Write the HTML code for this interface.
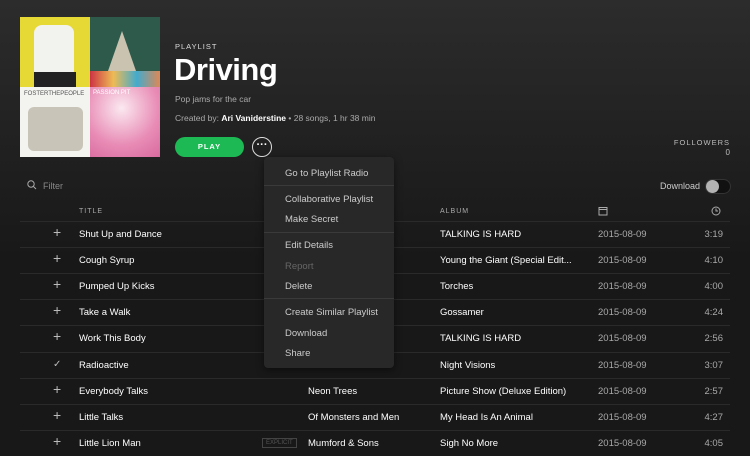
<!DOCTYPE html>
<html style="background:#181818"><head><style>
*{margin:0;padding:0;box-sizing:border-box}
body{width:750px;height:450px;overflow:hidden;font-family:"Liberation Sans",sans-serif;background:linear-gradient(#2c2c2c 0px,#1e1e1e 180px,#181818 260px);color:#fff;position:relative}
.abs{position:absolute}
.art{left:20px;top:17px;width:140px;height:140px}
.q{position:absolute;width:70px;height:70px}
.row{position:absolute;left:20px;width:710px;height:26px;border-top:1px solid #2a2a2a;font-size:9.5px}
.row span{position:absolute;top:7px;white-space:nowrap}
.t{left:59px;color:#fff}
.ar{left:288px;color:#fff}
.al{left:420px;color:#fff}
.d{left:578px;color:#aaa}
.du{right:7px;color:#aaa}
.pl{left:33px;color:#bbb;font-size:14px;top:2px!important;font-weight:300}
.menu{left:264px;top:157px;width:130px;height:211px;background:#282828;border-radius:4px;box-shadow:0 2px 8px rgba(0,0,0,.5);font-size:9.5px;color:#ccc}
.menu div{position:absolute;left:21px}
.sep{left:0!important;width:130px;height:1px;background:#3a3a3a}
</style></head><body>
<div class="abs art">
 <div class="q" style="left:0;top:0;background:#e6d835"><div class="abs" style="left:14px;top:8px;width:40px;height:60px;background:#f2f2ee;border-radius:8px 8px 0 0"></div><div class="abs" style="left:14px;top:55px;width:42px;height:15px;background:#222"></div></div>
 <div class="q" style="left:70px;top:0;background:#2e5a4c"><div class="abs" style="left:0;top:54px;width:70px;height:16px;background:linear-gradient(90deg,#c34,#eb5,#4ac,#d85)"></div><div class="abs" style="left:18px;top:14px;width:0;height:0;border-left:14px solid transparent;border-right:14px solid transparent;border-bottom:40px solid #c9c3b0"></div></div>
 <div class="q" style="left:0;top:70px;background:#f3f3f0"><div class="abs" style="left:8px;top:20px;width:55px;height:44px;background:#b5b0a0;opacity:.7;border-radius:6px"></div><div class="abs" style="left:4px;top:4px;font-size:6px;color:#555">FOSTERTHEPEOPLE</div></div>
 <div class="q" style="left:70px;top:70px;background:radial-gradient(circle at 45% 30%,#fbe9f0,#e88bb5 60%,#d86a9e)"><div class="abs" style="left:3px;top:3px;font-size:6px;color:#fff">PASSION PIT</div></div>
</div>
<div class="abs" style="left:175px;top:42px;font-size:7.5px;letter-spacing:1px;color:#ddd">PLAYLIST</div>
<div class="abs" style="left:174px;top:52px;font-size:31px;font-weight:bold;letter-spacing:-0.5px">Driving</div>
<div class="abs" style="left:175px;top:94px;font-size:8.5px;color:#aaa">Pop jams for the car</div>
<div class="abs" style="left:175px;top:113px;font-size:8.5px;color:#aaa">Created by: <b style="color:#fff">Ari Vaniderstine</b> • 28 songs, 1 hr 38 min</div>
<div class="abs" style="left:175px;top:137px;width:69px;height:20px;border-radius:10px;background:#1db954;font-size:7.5px;font-weight:bold;letter-spacing:1px;text-align:center;line-height:20px">PLAY</div>
<div class="abs" style="left:252px;top:137px;width:20px;height:20px;border-radius:50%;border:1px solid #ddd;text-align:center;line-height:14px;font-size:11px;font-weight:bold">···</div>
<div class="abs" style="right:20px;top:138px;font-size:7.5px;letter-spacing:1px;color:#bbb">FOLLOWERS</div>
<div class="abs" style="right:20px;top:148px;font-size:8px;color:#bbb">0</div>
<svg class="abs" style="left:27px;top:180px" width="10" height="10"><circle cx="4" cy="4" r="3.2" fill="none" stroke="#aaa" stroke-width="1"/><line x1="6.5" y1="6.5" x2="9" y2="9" stroke="#aaa"/></svg>
<div class="abs" style="left:43px;top:181px;font-size:9px;color:#888">Filter</div>
<div class="abs" style="left:660px;top:181px;font-size:9px;color:#ccc">Download</div>
<div class="abs" style="left:705px;top:179px;width:26px;height:15px;border-radius:8px;background:#111;border:1px solid #333"></div>
<div class="abs" style="left:706px;top:180px;width:13px;height:13px;border-radius:50%;background:#b3b3b3"></div>
<div class="abs" style="left:79px;top:208px;font-size:7px;letter-spacing:1px;color:#aaa">TITLE</div>
<div class="abs" style="left:440px;top:208px;font-size:7px;letter-spacing:1px;color:#aaa">ALBUM</div>
<svg class="abs" style="left:598px;top:206px" width="10" height="10"><rect x="1" y="1.5" width="8" height="7.5" fill="none" stroke="#aaa"/><line x1="1" y1="3.5" x2="9" y2="3.5" stroke="#aaa"/></svg>
<svg class="abs" style="left:711px;top:206px" width="10" height="10"><circle cx="5" cy="5" r="4" fill="none" stroke="#aaa"/><path d="M5 2.5V5H7" fill="none" stroke="#aaa"/></svg>

<div class="row" style="top:221px"><span class="pl">+</span><span class="t">Shut Up and Dance</span><span class="al">TALKING IS HARD</span><span class="d">2015-08-09</span><span class="du">3:19</span></div>
<div class="row" style="top:247px"><span class="pl">+</span><span class="t">Cough Syrup</span><span class="al">Young the Giant (Special Edit...</span><span class="d">2015-08-09</span><span class="du">4:10</span></div>
<div class="row" style="top:273px"><span class="pl">+</span><span class="t">Pumped Up Kicks</span><span class="al">Torches</span><span class="d">2015-08-09</span><span class="du">4:00</span></div>
<div class="row" style="top:299px"><span class="pl">+</span><span class="t">Take a Walk</span><span class="al">Gossamer</span><span class="d">2015-08-09</span><span class="du">4:24</span></div>
<div class="row" style="top:325px"><span class="pl">+</span><span class="t">Work This Body</span><span class="al">TALKING IS HARD</span><span class="d">2015-08-09</span><span class="du">2:56</span></div>
<div class="row" style="top:352px"><span class="pl" style="font-size:10px;top:6px!important">✓</span><span class="t">Radioactive</span><span class="al">Night Visions</span><span class="d">2015-08-09</span><span class="du">3:07</span></div>
<div class="row" style="top:378px"><span class="pl">+</span><span class="t">Everybody Talks</span><span class="ar">Neon Trees</span><span class="al">Picture Show (Deluxe Edition)</span><span class="d">2015-08-09</span><span class="du">2:57</span></div>
<div class="row" style="top:404px"><span class="pl">+</span><span class="t">Little Talks</span><span class="ar">Of Monsters and Men</span><span class="al">My Head Is An Animal</span><span class="d">2015-08-09</span><span class="du">4:27</span></div>
<div class="row" style="top:430px"><span class="pl">+</span><span class="t">Little Lion Man</span><span style="left:242px;top:7px;font-size:6px;color:#555;border:1px solid #444;padding:1px 3px">EXPLICIT</span><span class="ar">Mumford &amp; Sons</span><span class="al">Sigh No More</span><span class="d">2015-08-09</span><span class="du">4:05</span></div>

<div class="abs menu">
 <div style="top:11px">Go to Playlist Radio</div>
 <div class="sep" style="top:28px"></div>
 <div style="top:37px">Collaborative Playlist</div>
 <div style="top:57px">Make Secret</div>
 <div class="sep" style="top:75px"></div>
 <div style="top:83px">Edit Details</div>
 <div style="top:104px;color:#666">Report</div>
 <div style="top:124px">Delete</div>
 <div class="sep" style="top:141px"></div>
 <div style="top:150px">Create Similar Playlist</div>
 <div style="top:171px">Download</div>
 <div style="top:191px">Share</div>
</div>
</body></html>
